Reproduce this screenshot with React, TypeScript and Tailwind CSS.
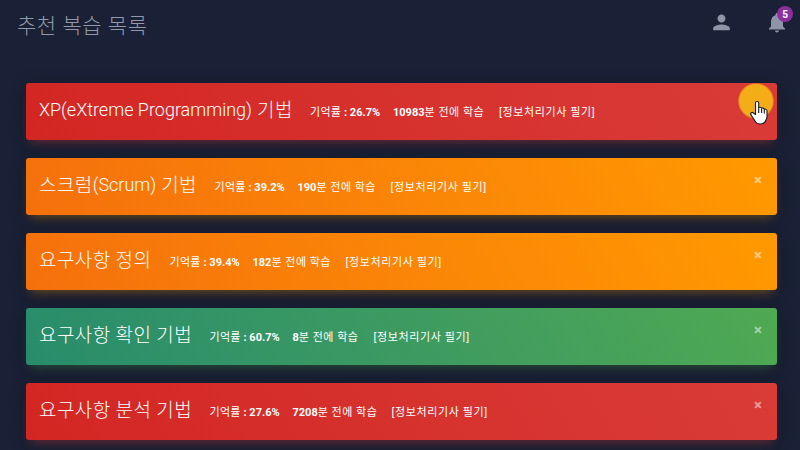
import { Fragment } from 'react';

const red = 'from-[#d32623] to-[#d93b37] shadow-[0_4px_20px_0_rgba(0,0,0,0.14),0_7px_10px_-5px_rgba(244,67,54,0.4)]';
const orange = 'from-[#f5700c] to-[#ff9900] shadow-[0_4px_20px_0_rgba(0,0,0,0.14),0_7px_10px_-5px_rgba(255,152,0,0.4)]';
const green = 'from-[#288c6c] to-[#4fa952] shadow-[0_4px_20px_0_rgba(0,0,0,0.14),0_7px_10px_-5px_rgba(76,175,80,0.4)]';

const rows = [
  { latin: 'XP(eXtreme Programming)', ko: ' 기법', w: 'w-[253px]', rate: '26.7%', n: '10983', aw: 'w-[91px]', c: red, close: false },
  { pre: '스크럼', latin: '(Scrum)', ko: ' 기법', w: 'w-[157.5px]', rate: '39.2%', n: '190', aw: 'w-[78px]', c: orange, close: true },
  { ko: '요구사항 정의', w: 'w-[112.5px]', rate: '39.4%', n: '182', aw: 'w-[78px]', c: orange, close: true },
  { ko: '요구사항 확인 기법', w: 'w-[152.5px]', rate: '60.7%', n: '8', aw: 'w-[66px]', c: green, close: true },
  { ko: '요구사항 분석 기법', w: 'w-[152.5px]', rate: '27.6%', n: '7208', aw: 'w-[84px]', c: red, close: true },
];

const dots = [[9, 12], [15, 8], [21, 12], [27, 9], [11, 18], [17, 16], [25, 17], [31, 15], [8, 23], [14, 24], [30, 21], [20, 6], [12, 29]];

export default function App() {
  return (
    <div className="relative h-[450px] w-[800px] overflow-hidden bg-[#1a2035] font-['Roboto','Noto_Sans_CJK_KR',sans-serif] text-white">
      <header className="flex h-[83px] items-start justify-between pl-[17px]">
        <h1 className="pt-[11px] text-[21px] leading-[30px] font-light tracking-[0.55px] whitespace-nowrap text-[#9399a8]">추천 복습 목록</h1>
        <div className="flex gap-[32px] pt-[11px] pr-[11px] text-[#8f94a6]">
          <svg className="size-6" viewBox="0 0 24 24" fill="currentColor">
            <path d="M12.500 11.500c2.210 0 4-1.790 4-4s-1.790-4-4-4-4 1.790-4 4 1.790 4 4 4zm0 2c-2.670 0-8.300 1.200-8.300 3.700v2.100h16.600v-2.100c0-2.500-5.630-3.700-8.300-3.700z" />
          </svg>
          <div className="relative">
            <svg className="size-6" viewBox="0 0 24 24" fill="currentColor">
              <path d="M12 21.500c1.100 0 2-.9 2-2h-4c0 1.100.89 2 2 2zm6-6v-5c0-3.070-1.640-5.640-4.500-6.320V3.500c0-.83-.67-1.500-1.500-1.500s-1.500.67-1.500 1.500v.68C7.630 4.860 6 7.420 6 10.500v5l-2 2v1h16v-1l-2-2z" />
            </svg>
            <span className="absolute -top-[5px] left-[12px] flex size-4 items-center justify-center rounded-full bg-[#8c2fa0] text-[10px] font-bold text-white">5</span>
          </div>
        </div>
      </header>
      <main className="flex flex-col gap-[18px] pr-[23px] pl-[26px]">
        {rows.map((r) => (
          <article key={r.rate} className={`flex h-[57px] shrink-0 items-center rounded-[3px] bg-linear-60 pl-[13px] whitespace-nowrap ${r.c}`}>
            <h2 className={`${r.w} -mt-[4px] text-[18px] leading-[28px] font-light`}>
              {r.pre && <span className="relative top-px text-[19px] tracking-[0.4px]">{r.pre}</span>}
              {r.latin && <Fragment>{r.latin}</Fragment>}
              <span className="relative top-px text-[19px] tracking-[0.4px]">{r.ko}</span>
            </h2>
            <p className="ml-[18px] w-[70px] pt-[3px] text-[11px]">
              <span className="tracking-[0.3px]">기억률</span>
              <b> : {r.rate}</b>
            </p>
            <p className={`ml-[13px] ${r.aw} pt-[3px] text-[11px]`}>
              <b>{r.n}</b>
              <span className="tracking-[0.5px]">분 전에 학습</span>
            </p>
            <p className="ml-[15px] pt-[3px] text-[11px] tracking-[0.62px]">[정보처리기사 필기]</p>
            {r.close && <span className="mr-[15px] -mt-[12px] ml-auto text-[15px] font-bold text-white/50">×</span>}
          </article>
        ))}
      </main>
      <svg className="absolute top-[81px] left-[736px]" width="40" height="40" viewBox="-2 -2 40 40">
        <circle cx="18" cy="18" r="18" fill="#f5ad17" opacity=".45" />
        <circle cx="18" cy="18" r="17" fill="#f5ad17" />
        {dots.map(([x, y]) => (
          <rect key={`${x}-${y}`} x={x} y={y} width="1" height="1" fill="#b5c51b" />
        ))}
      </svg>
      <svg className="absolute top-[100px] left-[749px]" width="20" height="26" viewBox="0 0 20 26">
        <path d="M6.500 14.500V3c0-2 3.200-2 3.200 0v4.700c.8-.7 2.500-.5 2.900.6.9-.5 2.300-.2 2.600.8 1.300-.4 2.800.4 2.800 2v5.400c0 1.500-.6 2.400-1 3.500-.9 2.700-2.900 4-5.800 4-3 0-4.400-1.300-5.500-3.500L1.800 14.600c-.7-1.600 1.300-2.900 2.700-1.600z" fill="#fff" stroke="#171923" strokeWidth="1.100" strokeLinejoin="round" />
        <path d="M9.700 8v5M12.600 8.500V13M15.300 9.300V13.500" stroke="#171923" strokeWidth="1.100" />
      </svg>
    </div>
  );
}
